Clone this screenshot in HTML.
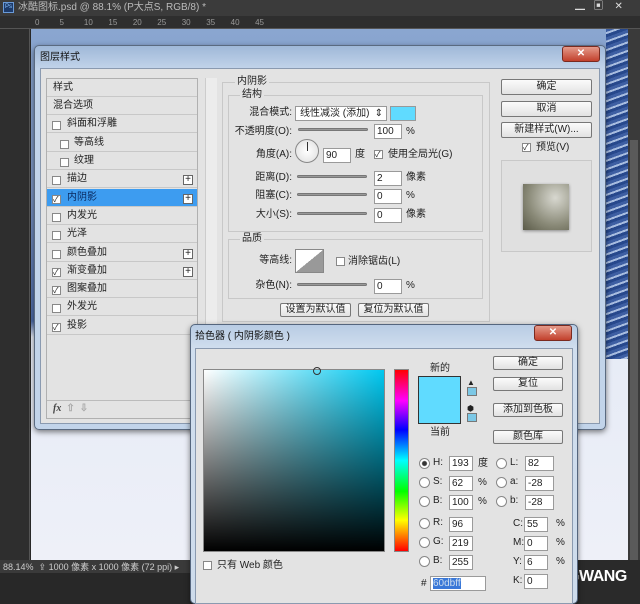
<!DOCTYPE html>
<html><head><meta charset="utf-8"><style>
*{margin:0;padding:0;box-sizing:border-box}
body{width:640px;height:604px;overflow:hidden;background:#282828;font-family:"Liberation Sans","Noto Sans CJK SC",sans-serif;font-size:10px;color:#222;position:relative}
.a{position:absolute}
.t{position:absolute;white-space:nowrap;line-height:12px}
.r{position:absolute;white-space:nowrap;line-height:12px;left:212px;width:80px;text-align:right}
.btn{position:absolute;background:linear-gradient(#fbfbfb,#e2e2e2);border:1px solid #777;border-radius:2px;text-align:center;font-size:10px;line-height:14px}
.in{position:absolute;background:#fff;border:1px solid #9a9a9a;font-size:10px;line-height:13px;height:15px;padding-left:2px}
.cb{position:absolute;width:9px;height:9px;border:1px solid #888;background:#fff}
.row{position:absolute;left:47px;width:150px;height:18px;border-bottom:1px solid #c8c8c8;line-height:17px;padding-left:6px}
.sl{position:absolute;height:3px;background:#999;border:1px solid #777;border-radius:2px}
.rad{position:absolute;width:11px;height:11px;border:1px solid #888;border-radius:50%;background:#fff}
.plus{position:absolute;left:183px;width:10px;height:10px;border:1px solid #666;background:#fff;font-size:10px;line-height:8px;text-align:center}
</style></head><body>
<div class="a" style="left:0;top:0;width:640px;height:16px;background:#3b3b3b"></div>
<div class="a" style="left:3px;top:2px;width:11px;height:11px;background:#1d3b6b;border:1px solid #6a9ad8;font-size:6px;color:#8cc4ff;line-height:9px;text-align:center">Ps</div>
<div class="t" style="left:18px;top:2px;color:#bbb;font-size:10px">冰酷图标.psd @ 88.1% (P大点S, RGB/8) *</div>
<div class="t" style="left:575px;top:1px;color:#ddd;font-size:10px">▁&nbsp;&nbsp;&nbsp;▣&nbsp;&nbsp;&nbsp;&nbsp;✕</div>
<div class="a" style="left:0;top:16px;width:640px;height:13px;background:#2e2e2e;border-bottom:1px solid #555"></div>
<div class="t" style="left:35px;top:17px;color:#999;font-size:8px">0&nbsp;&nbsp;&nbsp;&nbsp;&nbsp;&nbsp;&nbsp;&nbsp;&nbsp;5&nbsp;&nbsp;&nbsp;&nbsp;&nbsp;&nbsp;&nbsp;&nbsp;&nbsp;10&nbsp;&nbsp;&nbsp;&nbsp;&nbsp;&nbsp;&nbsp;15&nbsp;&nbsp;&nbsp;&nbsp;&nbsp;&nbsp;&nbsp;20&nbsp;&nbsp;&nbsp;&nbsp;&nbsp;&nbsp;&nbsp;25&nbsp;&nbsp;&nbsp;&nbsp;&nbsp;&nbsp;&nbsp;30&nbsp;&nbsp;&nbsp;&nbsp;&nbsp;&nbsp;&nbsp;35&nbsp;&nbsp;&nbsp;&nbsp;&nbsp;&nbsp;&nbsp;40&nbsp;&nbsp;&nbsp;&nbsp;&nbsp;&nbsp;&nbsp;45</div>
<div class="a" style="left:0;top:29px;width:30px;height:531px;background:#2e2e2e;border-right:1px solid #555"></div>
<div class="a" style="left:31px;top:29px;width:597px;height:531px;background:linear-gradient(#8aa6d0 0%,#7c96c4 30%,#4d6aa6 55%,#e6ebf6 58%,#eef0f8 100%)"></div>
<div class="a" style="left:606px;top:29px;width:22px;height:330px;background:repeating-linear-gradient(160deg,#3e5fa3 0 3px,#a8bde0 3px 5px,#27488c 5px 8px)"></div>
<div class="a" style="left:628px;top:29px;width:12px;height:531px;background:#3a3a3a"></div>
<div class="a" style="left:630px;top:140px;width:8px;height:420px;background:#5a5a5a"></div>
<div class="a" style="left:0;top:560px;width:190px;height:13px;background:#3a3a3a"></div>
<div class="t" style="left:3px;top:561px;color:#ccc;font-size:9px">88.14% &nbsp;⇪ 1000 像素 x 1000 像素 (72 ppi) ▸</div>
<div class="a" style="left:0;top:573px;width:190px;height:31px;background:#282828"></div>
<div class="a" style="left:578px;top:560px;width:62px;height:44px;background:#2a2a2a"></div>
<div class="t" style="left:556px;top:568px;color:#fff;font-size:16px;font-weight:bold;letter-spacing:-0.5px;line-height:18px">CGWANG</div>

<div class="a" style="left:34px;top:45px;width:572px;height:385px;background:linear-gradient(#9fb8d8,#c2d4ea 23px,#c2d4ea);border:1px solid #5a6a80;border-radius:5px;box-shadow:0 2px 6px rgba(0,0,0,.5)"></div>
<div class="t" style="left:40px;top:52px;font-size:10px;color:#111">图层样式</div>
<div class="a" style="left:562px;top:46px;width:38px;height:16px;background:linear-gradient(#e49a8a,#c2402c);border:1px solid #7a2a20;border-radius:3px;color:#fff;text-align:center;font-weight:bold;line-height:14px">✕</div>
<div class="a" style="left:40px;top:68px;width:560px;height:356px;background:#e3e3e3;border:1px solid #8a9ab0"></div>
<div class="a" style="left:46px;top:78px;width:152px;height:341px;background:#e3e3e3;border:1px solid #b0b0b0"></div>
<div class="row" style="top:79px">样式</div>
<div class="row" style="top:97px">混合选项</div>
<div class="row" style="top:115px;padding-left:20px">斜面和浮雕</div>
<div class="row" style="top:134px;padding-left:27px">等高线</div>
<div class="row" style="top:152px;padding-left:27px">纹理</div>
<div class="row" style="top:170px;padding-left:20px">描边</div>
<div class="row" style="top:189px;padding-left:20px;background:#3d9cf0;color:#0a2a60">内阴影</div>
<div class="row" style="top:207px;padding-left:20px">内发光</div>
<div class="row" style="top:225px;padding-left:20px">光泽</div>
<div class="row" style="top:244px;padding-left:20px">颜色叠加</div>
<div class="row" style="top:262px;padding-left:20px">渐变叠加</div>
<div class="row" style="top:280px;padding-left:20px">图案叠加</div>
<div class="row" style="top:298px;padding-left:20px">外发光</div>
<div class="row" style="top:317px;padding-left:20px">投影</div>
<div class="cb" style="left:52px;top:121px"></div>
<div class="cb" style="left:60px;top:140px"></div>
<div class="cb" style="left:60px;top:158px"></div>
<div class="cb" style="left:52px;top:176px"></div>
<div class="cb" style="left:52px;top:195px;font-size:8px;line-height:7px">✓</div>
<div class="cb" style="left:52px;top:213px"></div>
<div class="cb" style="left:52px;top:231px"></div>
<div class="cb" style="left:52px;top:250px"></div>
<div class="cb" style="left:52px;top:268px;font-size:8px;line-height:7px">✓</div>
<div class="cb" style="left:52px;top:286px;font-size:8px;line-height:7px">✓</div>
<div class="cb" style="left:52px;top:304px"></div>
<div class="cb" style="left:52px;top:323px;font-size:8px;line-height:7px">✓</div>
<div class="plus" style="top:175px">+</div>
<div class="plus" style="top:194px">+</div>
<div class="plus" style="top:249px">+</div>
<div class="plus" style="top:267px">+</div>
<div class="a" style="left:47px;top:400px;width:150px;height:1px;background:#bbb"></div>
<div class="t" style="left:53px;top:403px;font-style:italic;font-weight:bold;font-family:'Liberation Serif',serif;color:#444">fx<span style="color:#aaa;font-style:normal">&nbsp;&nbsp;⇧&nbsp;&nbsp;⇩</span></div>
<div class="a" style="left:205px;top:78px;width:12px;height:342px;background:#ececec;border-left:1px solid #ccc"></div>
<div class="a" style="left:222px;top:82px;width:268px;height:240px;border:1px solid #c8c8c8"></div>
<div class="t" style="left:235px;top:76px;background:#e3e3e3;padding:0 2px">内阴影</div>
<div class="a" style="left:228px;top:95px;width:255px;height:137px;border:1px solid #c8c8c8"></div>
<div class="t" style="left:240px;top:89px;background:#e3e3e3;padding:0 2px">结构</div>
<div class="r" style="top:107px">混合模式:</div>
<div class="a" style="left:295px;top:106px;width:92px;height:15px;background:#fff;border:1px solid #999;line-height:13px;padding-left:4px">线性减淡 (添加)<span style="float:right;padding-right:3px">⇕</span></div>
<div class="a" style="left:390px;top:106px;width:26px;height:15px;background:#60dbff;border:1px solid #999"></div>
<div class="r" style="top:126px">不透明度(O):</div>
<div class="sl" style="left:298px;top:128px;width:70px"></div>
<div class="in" style="left:374px;top:124px;width:28px">100</div><div class="t" style="left:406px;top:126px">%</div>
<div class="r" style="top:149px">角度(A):</div>
<div class="a" style="left:295px;top:139px;width:24px;height:24px;border:1px solid #888;border-radius:50%;background:radial-gradient(#fff,#ddd)"></div>
<div class="a" style="left:307px;top:142px;width:1px;height:9px;background:#333"></div>
<div class="in" style="left:323px;top:148px;width:28px">90</div>
<div class="t" style="left:355px;top:149px">度</div>
<div class="cb" style="left:374px;top:150px;font-size:8px;line-height:7px">✓</div>
<div class="t" style="left:388px;top:149px">使用全局光(G)</div>
<div class="r" style="top:172px">距离(D):</div><div class="sl" style="left:297px;top:175px;width:70px"></div><div class="in" style="left:374px;top:171px;width:28px">2</div><div class="t" style="left:406px;top:172px">像素</div>
<div class="r" style="top:190px">阻塞(C):</div><div class="sl" style="left:297px;top:193px;width:70px"></div><div class="in" style="left:374px;top:189px;width:28px">0</div><div class="t" style="left:406px;top:190px">%</div>
<div class="r" style="top:209px">大小(S):</div><div class="sl" style="left:297px;top:212px;width:70px"></div><div class="in" style="left:374px;top:208px;width:28px">0</div><div class="t" style="left:406px;top:209px">像素</div>
<div class="a" style="left:228px;top:239px;width:255px;height:60px;border:1px solid #c8c8c8"></div>
<div class="t" style="left:240px;top:233px;background:#e3e3e3;padding:0 2px">品质</div>
<div class="r" style="top:255px">等高线:</div>
<div class="a" style="left:295px;top:249px;width:29px;height:24px;background:linear-gradient(to top left,#999 50%,#fff 50%);border:1px solid #888"></div>
<div class="cb" style="left:336px;top:257px"></div><div class="t" style="left:348px;top:256px">消除锯齿(L)</div>
<div class="r" style="top:280px">杂色(N):</div><div class="sl" style="left:297px;top:283px;width:70px"></div><div class="in" style="left:374px;top:279px;width:28px">0</div><div class="t" style="left:406px;top:280px">%</div>
<div class="btn" style="left:280px;top:303px;width:71px;height:14px;line-height:12px">设置为默认值</div>
<div class="btn" style="left:358px;top:303px;width:71px;height:14px;line-height:12px">复位为默认值</div>
<div class="btn" style="left:501px;top:79px;width:91px;height:16px">确定</div>
<div class="btn" style="left:501px;top:101px;width:91px;height:16px">取消</div>
<div class="btn" style="left:501px;top:122px;width:91px;height:16px">新建样式(W)...</div>
<div class="cb" style="left:522px;top:143px;font-size:8px;line-height:7px">✓</div><div class="t" style="left:536px;top:142px">预览(V)</div>
<div class="a" style="left:501px;top:160px;width:91px;height:92px;border:1px solid #c8c8c8;background:#e0e0e0"></div>
<div class="a" style="left:523px;top:184px;width:46px;height:46px;background:radial-gradient(circle at 70% 30%,#d8d8d0,#8a8a78 60%,#5a5a48);box-shadow:0 1px 3px rgba(0,0,0,.4)"></div>

<div class="a" style="left:190px;top:324px;width:388px;height:280px;background:linear-gradient(#b8cce4,#d0deee 24px,#cddbeb);border:1px solid #55667e;border-radius:5px;box-shadow:0 2px 6px rgba(0,0,0,.5)"></div>
<div class="t" style="left:195px;top:331px;color:#111">拾色器 ( 内阴影颜色 )</div>
<div class="a" style="left:534px;top:325px;width:38px;height:16px;background:linear-gradient(#e49a8a,#c2402c);border:1px solid #7a2a20;border-radius:3px;color:#fff;text-align:center;font-weight:bold;line-height:14px">✕</div>
<div class="a" style="left:195px;top:348px;width:378px;height:256px;background:#e3e3e3;border:1px solid #8a9ab0"></div>
<div class="a" style="left:203px;top:369px;width:182px;height:183px;background:linear-gradient(to bottom,rgba(0,0,0,0),#000),linear-gradient(to right,#fff,#00c8f0);border:1px solid #888"></div>
<div class="a" style="left:313px;top:367px;width:8px;height:8px;border:1px solid #333;border-radius:50%"></div>
<div class="a" style="left:394px;top:369px;width:15px;height:183px;background:linear-gradient(#f00,#f0f 17%,#00f 33%,#0ff 50%,#0f0 67%,#ff0 83%,#f00);border:1px solid #888"></div>
<div class="t" style="left:430px;top:363px">新的</div>
<div class="a" style="left:418px;top:376px;width:43px;height:48px;background:#60dbff;border:1px solid #333"></div>
<div class="t" style="left:430px;top:427px">当前</div>
<div class="t" style="left:467px;top:377px;font-size:8px">▲</div>
<div class="a" style="left:467px;top:387px;width:10px;height:9px;background:#7cc8e6;border:1px solid #777"></div>
<div class="t" style="left:467px;top:403px;font-size:8px">⬢</div>
<div class="a" style="left:467px;top:413px;width:10px;height:9px;background:#7cc8e6;border:1px solid #777"></div>
<div class="btn" style="left:493px;top:356px;width:70px;height:14px;line-height:12px">确定</div>
<div class="btn" style="left:493px;top:377px;width:70px;height:14px;line-height:12px">复位</div>
<div class="btn" style="left:493px;top:403px;width:70px;height:14px;line-height:12px">添加到色板</div>
<div class="btn" style="left:493px;top:430px;width:70px;height:14px;line-height:12px">颜色库</div>
<div class="rad" style="left:419px;top:458px;background:radial-gradient(#333 2px,#fff 3px)"></div><div class="t" style="left:433px;top:457px">H:</div><div class="in" style="left:449px;top:456px;width:24px">193</div><div class="t" style="left:478px;top:458px">度</div>
<div class="rad" style="left:419px;top:477px"></div><div class="t" style="left:433px;top:476px">S:</div><div class="in" style="left:449px;top:476px;width:24px">62</div><div class="t" style="left:478px;top:477px">%</div>
<div class="rad" style="left:419px;top:496px"></div><div class="t" style="left:433px;top:495px">B:</div><div class="in" style="left:449px;top:495px;width:24px">100</div><div class="t" style="left:478px;top:496px">%</div>
<div class="rad" style="left:419px;top:518px"></div><div class="t" style="left:433px;top:517px">R:</div><div class="in" style="left:449px;top:517px;width:24px">96</div>
<div class="rad" style="left:419px;top:537px"></div><div class="t" style="left:433px;top:536px">G:</div><div class="in" style="left:449px;top:536px;width:24px">219</div>
<div class="rad" style="left:419px;top:556px"></div><div class="t" style="left:433px;top:555px">B:</div><div class="in" style="left:449px;top:555px;width:24px">255</div>
<div class="rad" style="left:496px;top:458px"></div><div class="t" style="left:510px;top:457px">L:</div><div class="in" style="left:525px;top:456px;width:29px">82</div>
<div class="rad" style="left:496px;top:477px"></div><div class="t" style="left:510px;top:476px">a:</div><div class="in" style="left:525px;top:476px;width:29px">-28</div>
<div class="rad" style="left:496px;top:496px"></div><div class="t" style="left:510px;top:495px">b:</div><div class="in" style="left:525px;top:495px;width:29px">-28</div>
<div class="t" style="left:513px;top:518px">C:</div><div class="in" style="left:524px;top:517px;width:24px">55</div><div class="t" style="left:556px;top:518px">%</div>
<div class="t" style="left:513px;top:537px">M:</div><div class="in" style="left:524px;top:536px;width:24px">0</div><div class="t" style="left:556px;top:537px">%</div>
<div class="t" style="left:513px;top:556px">Y:</div><div class="in" style="left:524px;top:555px;width:24px">6</div><div class="t" style="left:556px;top:556px">%</div>
<div class="t" style="left:513px;top:575px">K:</div><div class="in" style="left:524px;top:574px;width:24px">0</div>
<div class="t" style="left:421px;top:578px">#</div>
<div class="in" style="left:430px;top:576px;width:56px"><span style="background:#3a78d8;color:#cde">60dbff</span></div>
<div class="cb" style="left:203px;top:561px"></div><div class="t" style="left:217px;top:560px">只有 Web 颜色</div>
</body></html>
